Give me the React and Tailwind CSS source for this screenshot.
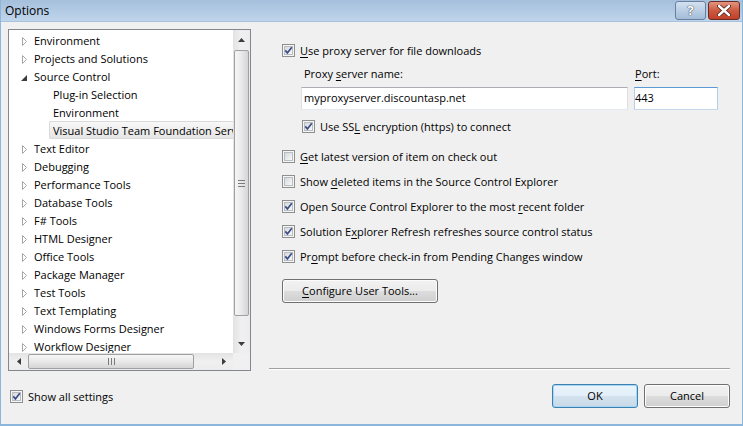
import { useState } from "react";

const CheckBox = ({ checked }) => (
  <svg width="13" height="13" viewBox="0 0 13 13" className="shrink-0">
    <defs>
      <linearGradient id="cbfill" x1="0" y1="0" x2="1" y2="1">
        <stop offset="0" stopColor="#d3d6db" />
        <stop offset="1" stopColor="#fbfbfb" />
      </linearGradient>
    </defs>
    <rect x="0.5" y="0.5" width="12" height="12" fill="#f5f5f5" stroke="#8e8f8f" />
    <rect x="2.5" y="2.5" width="8" height="8" fill="url(#cbfill)" stroke="#b9bcc1" />
    {checked && (
      <path d="M3.3 6.4 L5.4 8.9 L9.8 3.2" fill="none" stroke="#3b4d85" strokeWidth="1.7" />
    )}
  </svg>
);

const Collapsed = () => (
  <svg width="8" height="9" viewBox="0 0 8 9" className="shrink-0">
    <path d="M1.5 0.5 L5.5 4.5 L1.5 8.5 Z" fill="#fff" stroke="#a6a6a6" />
  </svg>
);

const Expanded = () => (
  <svg width="8" height="9" viewBox="0 0 8 9" className="shrink-0">
    <path d="M6 2 L6 8 L0 8 Z" fill="#3c3c3c" />
  </svg>
);

const U = ({ children }) => <span className="underline underline-offset-2">{children}</span>;

const Row = ({ checked, children, className = "" }) => (
  <div className={`flex items-center h-[16px] gap-[5px] ${className}`}>
    <CheckBox checked={checked} />
    <span className="leading-none">{children}</span>
  </div>
);

const tree = [
  { t: "Environment", lvl: 0 },
  { t: "Projects and Solutions", lvl: 0 },
  { t: "Source Control", lvl: 0, open: true },
  { t: "Plug-in Selection", lvl: 1 },
  { t: "Environment", lvl: 1 },
  { t: "Visual Studio Team Foundation Server", lvl: 1, sel: true },
  { t: "Text Editor", lvl: 0 },
  { t: "Debugging", lvl: 0 },
  { t: "Performance Tools", lvl: 0 },
  { t: "Database Tools", lvl: 0 },
  { t: "F# Tools", lvl: 0 },
  { t: "HTML Designer", lvl: 0 },
  { t: "Office Tools", lvl: 0 },
  { t: "Package Manager", lvl: 0 },
  { t: "Test Tools", lvl: 0 },
  { t: "Text Templating", lvl: 0 },
  { t: "Windows Forms Designer", lvl: 0 },
  { t: "Workflow Designer", lvl: 0 },
];

export default function App() {
  const [port, setPort] = useState("443");
  return (
    <div className="w-[743px] h-[426px] overflow-hidden flex flex-col bg-[#f0f0f0] border-x border-b-2 border-[#8cb6dc] text-[11px] text-black font-['Open_Sans',sans-serif]">
      {/* title bar */}
      <div className="h-[22px] shrink-0 flex items-center justify-between pl-[4px] pr-[2px] bg-gradient-to-b from-[#a5bfdc] to-[#bfd5eb] border-b border-[#a8c1dc]">
        <span className="text-[12px]">Options</span>
        <div className="flex gap-[2px] self-start mt-[1px]">
          <div className="w-[31px] h-[19px] rounded-[3px] border border-[#6b7f9c] bg-gradient-to-b from-[#d3e1f1] to-[#a3bcd9] flex items-center justify-center text-white font-bold text-[13px] [text-shadow:0_0_1px_#333,0_0_1px_#333]">
            ?
          </div>
          <div className="w-[32px] h-[19px] rounded-[3px] border border-[#6a2b22] bg-gradient-to-b from-[#e3957f] via-[#cc5a41] to-[#c0402a] flex items-center justify-center">
            <svg width="14" height="11" viewBox="0 0 14 11">
              <path d="M2 1 L12 10 M12 1 L2 10" stroke="#4a1e18" strokeWidth="4" strokeLinecap="round" />
              <path d="M2 1 L12 10 M12 1 L2 10" stroke="#fff" strokeWidth="2.4" strokeLinecap="round" />
            </svg>
          </div>
        </div>
      </div>

      <div className="flex flex-1 pt-[7px] pl-[7px] gap-[18px]">
        {/* left column */}
        <div className="w-[243px] flex flex-col">
          <div className="h-[342px] border border-[#828790] bg-white flex flex-col">
            <div className="flex flex-1 min-h-0">
              <div className="flex-1 overflow-hidden pt-[1px]">
                {tree.map((n, i) => (
                  <div key={i} className="h-[18px] flex items-center whitespace-nowrap">
                    {n.lvl === 0 ? (
                      <div className="flex items-center">
                        <div className="w-[25px] flex justify-start pl-[12px] pt-[2px]">
                          {n.open ? <Expanded /> : <Collapsed />}
                        </div>
                        <span className="leading-none">{n.t}</span>
                      </div>
                    ) : n.sel ? (
                      <div className="ml-[40px] flex-1 h-[18px] flex items-center pl-[3px] border border-r-0 border-[#d9d9d9] rounded-l-[2px] bg-gradient-to-b from-[#f8f8f8] to-[#e5e5e5] overflow-hidden">
                        <span className="leading-none">{n.t}</span>
                      </div>
                    ) : (
                      <span className="pl-[44px] leading-none">{n.t}</span>
                    )}
                  </div>
                ))}
              </div>
              {/* vertical scrollbar */}
              <div className="w-[17px] flex flex-col bg-gradient-to-r from-[#e3e3e3] via-[#f0f0f0] to-[#ececec]">
                <div className="h-[19px] flex items-center justify-center">
                  <svg width="7" height="4" viewBox="0 0 7 4"><path d="M0 4 L3.5 0 L7 4 Z" fill="#3c3c3c" /></svg>
                </div>
                <div className="mx-[1px] mt-[1px] h-[266px] rounded-[2px] border border-[#a0a0a0] bg-gradient-to-r from-[#f6f6f6] via-[#e9e9e9] to-[#d5d5d5] flex flex-col items-center justify-center gap-[2px]">
                  <div className="w-[7px] h-px bg-[#7a7a7a]" />
                  <div className="w-[7px] h-px bg-[#7a7a7a]" />
                  <div className="w-[7px] h-px bg-[#7a7a7a]" />
                </div>
                <div className="flex-1" />
                <div className="h-[19px] flex items-center justify-center">
                  <svg width="7" height="4" viewBox="0 0 7 4"><path d="M0 0 L3.5 4 L7 0 Z" fill="#3c3c3c" /></svg>
                </div>
              </div>
            </div>
            {/* horizontal scrollbar */}
            <div className="h-[17px] shrink-0 flex">
              <div className="flex-1 flex items-center bg-gradient-to-b from-[#e3e3e3] via-[#f0f0f0] to-[#ececec]">
                <div className="w-[19px] flex justify-center">
                  <svg width="4" height="7" viewBox="0 0 4 7"><path d="M4 0 L0 3.5 L4 7 Z" fill="#3c3c3c" /></svg>
                </div>
                <div className="w-[166px] h-[15px] rounded-[2px] border border-[#a0a0a0] bg-gradient-to-b from-[#f6f6f6] via-[#e9e9e9] to-[#d5d5d5] flex items-center justify-center gap-[2px]">
                  <div className="w-px h-[7px] bg-[#7a7a7a]" />
                  <div className="w-px h-[7px] bg-[#7a7a7a]" />
                  <div className="w-px h-[7px] bg-[#7a7a7a]" />
                </div>
                <div className="flex-1" />
                <div className="w-[19px] flex justify-center">
                  <svg width="4" height="7" viewBox="0 0 4 7"><path d="M0 0 L4 3.5 L0 7 Z" fill="#3c3c3c" /></svg>
                </div>
              </div>
              <div className="w-[17px] bg-[#f0f0f0]" />
            </div>
          </div>
          <div className="mt-[17px] ml-[2px]">
            <Row checked>Show all settings</Row>
          </div>
        </div>

        {/* right column */}
        <div className="w-[462px] flex flex-col">
          <div className="h-[339px] pl-[13px] flex flex-col">
            <Row checked className="mt-[13px]">
              <U>U</U>se proxy server for file downloads
            </Row>
            <div className="ml-[19px] mt-[8px] flex gap-[6px]">
              <div className="w-[327px] flex flex-col">
                <div className="h-[16px] flex items-center pl-[3px]">
                  <span>
                    Proxy <U>s</U>erver name:
                  </span>
                </div>
                <div className="mt-[5px] h-[23px] border border-[#abadb3] border-b-[#e3e9ef] border-x-[#dbdfe6] bg-white flex items-center pl-[2px]">
                  myproxyserver.discountasp.net
                </div>
              </div>
              <div className="w-[84px] flex flex-col">
                <div className="h-[16px] flex items-center pl-[1px]">
                  <span>
                    <U>P</U>ort:
                  </span>
                </div>
                <div className="mt-[5px] h-[23px] border border-[#5a9ad6] border-b-[#c5daed] border-x-[#b5cfe7] bg-white flex items-center">
                  <input
                    value={port}
                    onChange={(e) => setPort(e.target.value)}
                    className="w-full outline-none bg-transparent"
                  />
                </div>
              </div>
            </div>
            <Row checked className="ml-[20px] mt-[8px]">
              Use SS<U>L</U> encryption (https) to connect
            </Row>
            <Row className="mt-[14px]">
              <U>G</U>et latest version of item on check out
            </Row>
            <Row className="mt-[9px]">
              Show <U>d</U>eleted items in the Source Control Explorer
            </Row>
            <Row checked className="mt-[9px]">
              Open Source Control Explorer to the most <U>r</U>ecent folder
            </Row>
            <Row checked className="mt-[9px]">
              Solution E<U>x</U>plorer Refresh refreshes source control status
            </Row>
            <Row checked className="mt-[9px]">
              Pr<U>o</U>mpt before check-in from Pending Changes window
            </Row>
            <button className="mt-[15px] w-[156px] h-[24px] rounded-[3px] border border-[#707070] [background-image:linear-gradient(#f2f2f2,#ebebeb_50%,#dddddd_50%,#cfcfcf)] shadow-[inset_0_0_0_1px_#fcfcfc]">
              <U>C</U>onfigure User Tools...
            </button>
          </div>
          <div className="w-[461px] h-px bg-[#a0a0a0] shadow-[0_1px_0_#ffffff]" />
          <div className="mt-[15px] flex justify-end gap-[6px] pr-[1px]">
            <button className="w-[86px] h-[24px] rounded-[3px] border border-[#3c7fb1] [background-image:linear-gradient(#eaf4fb,#e2eef8_50%,#d3e2ee_50%,#c8d9e7)] shadow-[inset_0_0_0_1px_#a6d7f3]">
              OK
            </button>
            <button className="w-[86px] h-[24px] rounded-[3px] border border-[#707070] [background-image:linear-gradient(#f2f2f2,#ebebeb_50%,#dddddd_50%,#cfcfcf)] shadow-[inset_0_0_0_1px_#fcfcfc]">
              Cancel
            </button>
          </div>
        </div>
      </div>
    </div>
  );
}
